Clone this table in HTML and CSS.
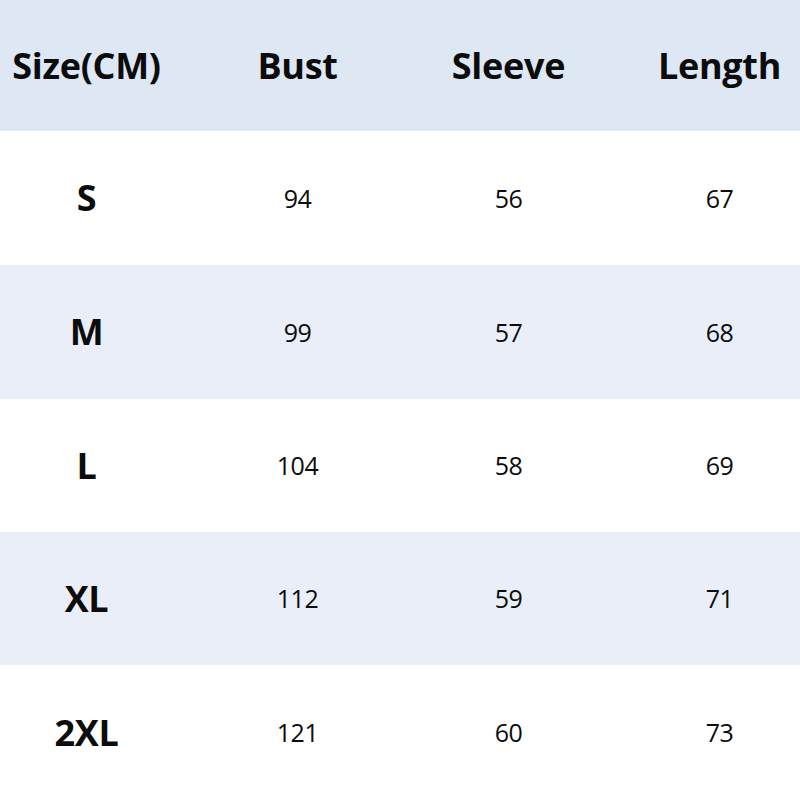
FILE: index.html
```html
<!DOCTYPE html>
<html>
<head>
<meta charset="utf-8">
<link rel="stylesheet" href="styles.css">
</head>
<body>
<div class="table">
  <div class="row head">
    <div class="cell">Size(CM)</div>
    <div class="cell">Bust</div>
    <div class="cell">Sleeve</div>
    <div class="cell">Length</div>
  </div>
  <div class="row">
    <div class="cell size">S</div>
    <div class="cell">94</div>
    <div class="cell">56</div>
    <div class="cell">67</div>
  </div>
  <div class="row alt">
    <div class="cell size">M</div>
    <div class="cell">99</div>
    <div class="cell">57</div>
    <div class="cell">68</div>
  </div>
  <div class="row">
    <div class="cell size">L</div>
    <div class="cell">104</div>
    <div class="cell">58</div>
    <div class="cell">69</div>
  </div>
  <div class="row alt">
    <div class="cell size">XL</div>
    <div class="cell">112</div>
    <div class="cell">59</div>
    <div class="cell">71</div>
  </div>
  <div class="row">
    <div class="cell size">2XL</div>
    <div class="cell">121</div>
    <div class="cell">60</div>
    <div class="cell">73</div>
  </div>
</div>
</body>
</html>
```
FILE: styles.css
```css
html, body {
  margin: 0;
  padding: 0;
  background: #ffffff;
  overflow: hidden;
}
.table {
  width: 800px;
  height: 800px;
  display: grid;
  grid-template-rows: 131px 134px 134px 133px 133px 135px;
  font-family: "Open Sans", "Noto Sans", sans-serif;
  color: #0c0c0c;
}
.row {
  display: grid;
  grid-template-columns: repeat(4, 211px);
  margin-left: -19px;
  align-items: center;
  background: #ffffff;
}
.row.head {
  background: #dee8f4;
}
.row.alt {
  background: #e9eef8;
}
.cell {
  text-align: center;
  font-size: 25px;
  letter-spacing: -0.5px;
  line-height: 1;
}
.head .cell,
.cell.size {
  font-size: 36px;
  font-weight: 700;
  letter-spacing: -0.3px;
}
```
